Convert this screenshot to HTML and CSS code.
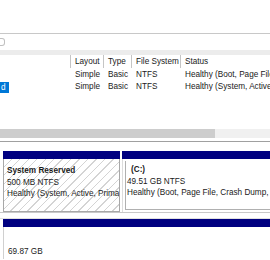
FILE: index.html
```html
<!DOCTYPE html>
<html>
<head>
<meta charset="utf-8">
<link rel="stylesheet" href="styles.css">
</head>
<body>
<div class="app">
  <div class="topspace"></div>
  <div class="toolbar"><span class="tb-icon"></span></div>
  <div class="band"></div>
  <div class="list">
    <div class="row hdr">
      <div class="c c0"></div>
      <div class="c c1">Layout</div>
      <div class="c c2">Type</div>
      <div class="c c3">File System</div>
      <div class="c c4">Status</div>
    </div>
    <div class="row">
      <div class="c c0"></div>
      <div class="c c1">Simple</div>
      <div class="c c2">Basic</div>
      <div class="c c3">NTFS</div>
      <div class="c c4">Healthy (Boot, Page File, Crash Dump, Primary Partition)</div>
    </div>
    <div class="row">
      <div class="c c0"><span class="sel">d</span></div>
      <div class="c c1">Simple</div>
      <div class="c c2">Basic</div>
      <div class="c c3">NTFS</div>
      <div class="c c4">Healthy (System, Active, Primary Partition)</div>
    </div>
  </div>
  <div class="hscroll"><div class="thumb"></div></div>
  <div class="splitter"></div>
  <div class="disks">
    <div class="disk">
      <div class="part p1">
        <div class="cap"></div>
        <div class="body hatch">
          <div class="name">System Reserved</div>
          <div>500 MB NTFS</div>
          <div>Healthy (System, Active, Primary Partition)</div>
        </div>
      </div>
      <div class="part p2">
        <div class="cap"></div>
        <div class="frame">
          <div class="body plain">
            <div class="name cname">(C:)</div>
            <div>49.51 GB NTFS</div>
            <div>Healthy (Boot, Page File, Crash Dump, Primary Partition)</div>
          </div>
        </div>
      </div>
    </div>
    <div class="disksep"></div>
    <div class="disk disk2">
      <div class="part p3">
        <div class="cap"></div>
        <div class="body blank">
          <div class="size">69.87 GB</div>
        </div>
      </div>
    </div>
  </div>
</div>
</body>
</html>
```

FILE: styles.css
```css
html, body { margin: 0; padding: 0; background: #fff; }
body { width: 270px; height: 260px; overflow: hidden; font-family: "Liberation Sans", Arial, sans-serif; font-size: 8.2px; color: #1a1a1a; }
.app { display: flex; flex-direction: column; width: 270px; }
.topspace { height: 33px; border-bottom: 1px solid #c8c8c8; }
.toolbar { height: 16px; }
.tb-icon { display: block; width: 5px; height: 8px; margin-top: 4px; border: 1px solid #c0c0c0; border-left: none; border-radius: 0 3px 3px 0; box-sizing: border-box; }
.band { height: 5px; background: #ececec; }
.list { height: 73px; }
.row { display: flex; height: 12px; line-height: 12px; white-space: nowrap; }
.row.hdr { height: 13px; line-height: 13px; margin-bottom: 1px; }
.c { overflow: hidden; box-sizing: border-box; padding-left: 4px; }
.hdr .c { border-right: 1px solid #c5c5c5; }
.c0 { width: 71px; padding-left: 0; }
.c1 { width: 33px; }
.c2 { width: 28px; }
.c3 { width: 49px; }
.c4 { flex: 1; }
.hdr .c4 { border-right: none; }
.sel { display: inline-block; background: #0078d7; color: #fff; width: 9px; height: 11px; line-height: 11px; padding-left: 1px; box-sizing: border-box; vertical-align: top; margin-top: 1px; }
.hscroll { height: 9px; background: #f0f0f0; margin-top: 1px; }
.thumb { width: 215px; height: 9px; background: #cdcdcd; }
.splitter { height: 3px; border-bottom: 1px solid #a0a0a0; }
.disks { padding-top: 9px; }
.disk { display: flex; gap: 2px; padding-left: 3px; height: 61px; }
.part { display: flex; flex-direction: column; }
.p1 { width: 117px; }
.p2 { flex: 1; }
.cap { height: 8px; background: #000080; }
.body { flex: 1; box-sizing: border-box; white-space: nowrap; overflow: hidden; line-height: 11.5px; }
.hatch { border: 1px solid #a8a8a8; border-top: none; padding: 6px 0 0 3px;
  background: repeating-linear-gradient(135deg, #fff 0 5px, #d4d4d4 5px 6px); }
.frame { flex: 1; display: flex; border-left: 1px solid #dcdcdc; padding: 2px 0 2px 2px; }
.plain { border-left: 1px solid #b0b0b0; border-bottom: 1px solid #b0b0b0; padding: 3px 0 0 1px; }
.cname { padding-left: 4px; }
.name { font-weight: bold; }
.disksep { height: 7px; border-top: 1px solid #c8c8c8; border-bottom: 1px solid #e0e0e0; box-sizing: border-box; }
.disk2 { height: 40px; }
.p3 { flex: 1; }
.blank { border-left: 1px solid #d0d0d0; padding: 19px 0 0 4px; }
```
